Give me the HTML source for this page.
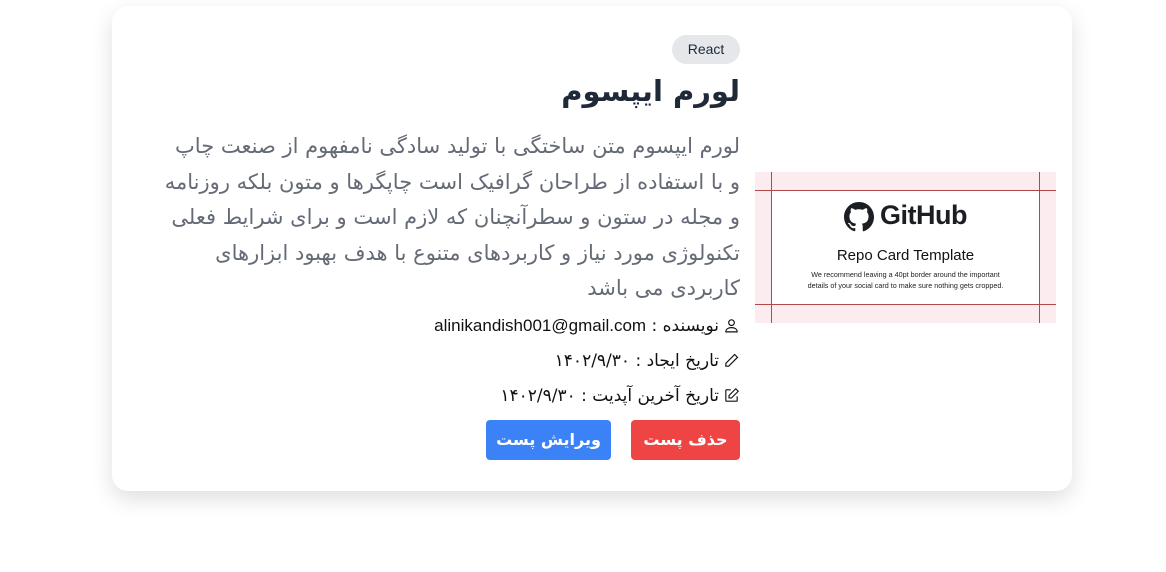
<!DOCTYPE html>
<html><head><meta charset="utf-8"><style>
body{margin:0;width:1166px;height:572px;background:#fff;font-family:"Liberation Sans","DejaVu Sans",sans-serif;overflow:hidden;position:relative}
.card{position:absolute;left:112px;top:6px;width:960px;height:485px;background:#fff;border-radius:16px;box-shadow:0 8px 22px rgba(0,0,0,.13)}
.a{position:absolute;direction:rtl;text-align:right;white-space:nowrap}
.badge{position:absolute;left:672px;top:35px;width:68px;height:29px;border-radius:15px;background:#e5e7eb;color:#1f2937;font-size:14px;line-height:29px;text-align:center}
h1{position:absolute;right:426px;top:74px;margin:0;font-size:29px;font-weight:bold;color:#1f2937;direction:rtl;font-family:"DejaVu Sans",sans-serif}
.p{position:absolute;right:426px;top:129px;direction:rtl;text-align:right;font-size:21px;line-height:35.5px;color:#656b76;font-family:"DejaVu Sans",sans-serif;white-space:nowrap}
.m{font-size:17px;color:#111;right:426px;font-family:"DejaVu Sans",sans-serif}
.m svg{vertical-align:-3px;margin-left:4px}
.btn{position:absolute;top:420px;height:40px;border-radius:4px;color:#fff;font-weight:bold;font-size:16px;line-height:40px;text-align:center;direction:rtl;font-family:"DejaVu Sans",sans-serif}
.img{position:absolute;left:755px;top:172px;width:301px;height:151px;background:#fdecef;overflow:hidden}
</style></head><body>
<div class="card"></div>
<div class="badge">React</div>
<h1>لورم ایپسوم</h1>
<div class="p">لورم ایپسوم متن ساختگی با تولید سادگی نامفهوم از صنعت چاپ<br>و با استفاده از طراحان گرافیک است چاپگرها و متون بلکه روزنامه<br>و مجله در ستون و سطرآنچنان که لازم است و برای شرایط فعلی<br>تکنولوژی مورد نیاز و کاربردهای متنوع با هدف بهبود ابزارهای<br>کاربردی می باشد</div>
<div class="a m" style="top:316px"><svg width="17" height="17" viewBox="0 0 24 24" fill="none" stroke="#111" stroke-width="1.6"><circle cx="12" cy="8" r="4"/><path d="M4 21c0-4 3.5-6 8-6s8 2 8 6z"/></svg>نویسنده : <span style="font-family:'Liberation Sans'">alinikandish001@gmail.com</span></div>
<div class="a m" style="top:351px"><svg width="17" height="17" viewBox="0 0 24 24" fill="none" stroke="#111" stroke-width="1.6"><path d="M16.5 3.5l4 4L8 20H4v-4z"/></svg>تاریخ ایجاد : ۱۴۰۲/۹/۳۰</div>
<div class="a m" style="top:386px"><svg width="17" height="17" viewBox="0 0 24 24" fill="none" stroke="#111" stroke-width="1.6"><path d="M11 4H5a1 1 0 0 0-1 1v14a1 1 0 0 0 1 1h14a1 1 0 0 0 1-1v-6"/><path d="M18 2.5l3.5 3.5L12 15.5H8.5V12z"/></svg>تاریخ آخرین آپدیت : ۱۴۰۲/۹/۳۰</div>
<div class="btn" style="left:631px;width:109px;background:#ef4444">حذف پست</div>
<div class="btn" style="left:486px;width:125px;background:#3b82f6">ویرایش پست</div>
<div class="img">
<div style="position:absolute;left:16px;top:18px;width:268px;height:114px;background:#fff"></div>
<div style="position:absolute;left:16px;top:0;width:1px;height:151px;background:#b04a4a"></div>
<div style="position:absolute;left:284px;top:0;width:1px;height:151px;background:#b04a4a"></div>
<div style="position:absolute;left:0;top:18px;width:301px;height:1px;background:#b04a4a"></div>
<div style="position:absolute;left:0;top:132px;width:301px;height:1px;background:#b04a4a"></div>
<svg style="position:absolute;left:89px;top:30px" width="30" height="30" viewBox="0 0 16 16"><path fill="#1b1f23" d="M8 0C3.58 0 0 3.58 0 8c0 3.54 2.29 6.53 5.47 7.59.4.07.55-.17.55-.38v-1.33c-2.23.48-2.7-1.07-2.7-1.07-.36-.92-.89-1.17-.89-1.17-.73-.5.06-.49.06-.49.8.06 1.23.83 1.23.83.71 1.22 1.87.87 2.33.66.07-.52.28-.87.5-1.07-1.78-.2-3.65-.89-3.65-3.95 0-.87.31-1.59.82-2.15-.08-.2-.36-1.02.08-2.12 0 0 .67-.21 2.2.82a7.6 7.6 0 0 1 4 0c1.53-1.04 2.2-.82 2.2-.82.44 1.1.16 1.92.08 2.12.51.56.82 1.27.82 2.15 0 3.07-1.87 3.75-3.65 3.95.29.25.54.73.54 1.48v2.2c0 .21.15.46.55.38A8 8 0 0 0 16 8c0-4.42-3.58-8-8-8z"/></svg>
<div style="position:absolute;left:125px;top:28px;font-size:27px;font-weight:bold;color:#1b1f23;letter-spacing:-.5px">GitHub</div>
<div style="position:absolute;left:0;width:301px;top:75px;text-align:center;font-size:15px;color:#111">Repo Card Template</div>
<div style="position:absolute;left:0;width:301px;top:97px;text-align:center;font-size:7.2px;line-height:11px;color:#222">We recommend leaving a 40pt border around the important<br>details of your social card to make sure nothing gets cropped.</div>
</div>
</body></html>
